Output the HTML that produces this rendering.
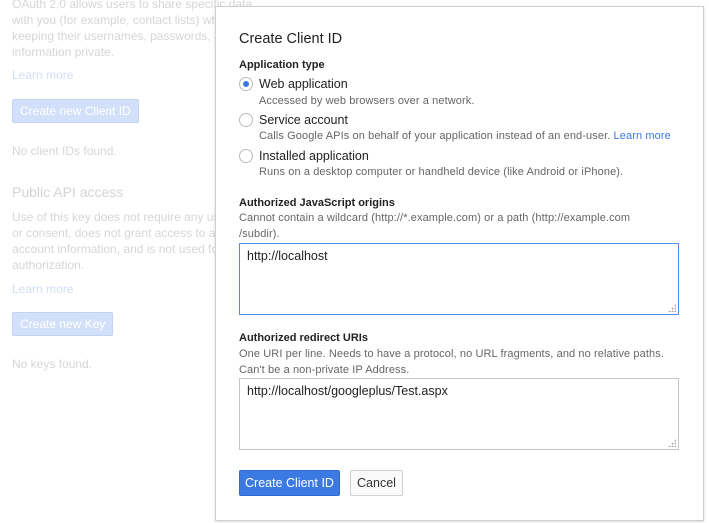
<!DOCTYPE html>
<html><head><style>
body{margin:0;width:709px;height:523px;overflow:hidden;background:#fff;font-family:"Liberation Sans",sans-serif;position:relative}
.a{position:absolute;white-space:nowrap}
.bg{color:#d6d6d6;font-size:12px}
.lnk{color:#d2def6;font-size:12px}
.bb{position:absolute;background:#d2e0f9;border:1px solid #c3d4f3;color:#fff;font-size:12px;line-height:22px;padding:0 7px;border-radius:2px}
#dlg{position:absolute;left:215px;top:6px;width:487px;height:513px;border:1px solid #cfcfcf;background:#fff;box-shadow:0 1px 3px rgba(0,0,0,.15)}
.h{font-size:11px;font-weight:bold;color:#222}
.d{font-size:11px;color:#666;letter-spacing:0.1px}
.r{font-size:12.5px;color:#222}
.rad{position:absolute;width:12px;height:12px;border:1px solid #bbb;border-radius:50%;background:#fff}
.ta{position:absolute;border:1px solid #c5c5c5;font-size:12.5px;color:#222;box-sizing:border-box;padding:5px 7px}
.grip{position:absolute;right:2px;bottom:2px;width:8px;height:8px;background:radial-gradient(circle,#aaa 0.8px,transparent 1px) 0 0/3px 3px;clip-path:polygon(100% 0,100% 100%,0 100%)}
</style></head><body>
<div class="a bg" style="left:12px;top:-4px;line-height:16px">OAuth 2.0 allows users to share specific data<br>with you (for example, contact lists) while<br>keeping their usernames, passwords, and other<br>information private.</div>
<div class="a lnk" style="left:12px;top:68px">Learn more</div>
<div class="bb" style="left:12px;top:99px">Create new Client ID</div>
<div class="a bg" style="left:12px;top:144px">No client IDs found.</div>
<div class="a" style="left:12px;top:184px;color:#d4d4d4;font-size:14px">Public API access</div>
<div class="a bg" style="left:12px;top:209px;line-height:16px">Use of this key does not require any user action<br>or consent, does not grant access to any<br>account information, and is not used for<br>authorization.</div>
<div class="a lnk" style="left:12px;top:282px">Learn more</div>
<div class="bb" style="left:12px;top:312px">Create new Key</div>
<div class="a bg" style="left:12px;top:357px">No keys found.</div>

<div id="dlg">
<div class="a" style="left:23px;top:24px;font-size:14.5px;color:#222">Create Client ID</div>
<div class="a h" style="left:23px;top:52px">Application type</div>
<div class="rad" style="left:23px;top:70px"><div style="position:absolute;left:3px;top:3px;width:6px;height:6px;border-radius:50%;background:#3b7ae3"></div></div>
<div class="a r" style="left:43px;top:70px">Web application</div>
<div class="a d" style="left:43px;top:88px">Accessed by web browsers over a network.</div>
<div class="rad" style="left:23px;top:106px"></div>
<div class="a r" style="left:43px;top:106px">Service account</div>
<div class="a d" style="left:43px;top:123px">Calls Google APIs on behalf of your application instead of an end-user. <span style="color:#3b7ae3">Learn more</span></div>
<div class="rad" style="left:23px;top:142px"></div>
<div class="a r" style="left:43px;top:142px">Installed application</div>
<div class="a d" style="left:43px;top:159px">Runs on a desktop computer or handheld device (like Android or iPhone).</div>
<div class="a h" style="left:23px;top:190px">Authorized JavaScript origins</div>
<div class="a d" style="left:23px;top:203px;line-height:16px">Cannot contain a wildcard (http://*.example.com) or a path (http://example.com<br>/subdir).</div>
<div class="ta" style="left:23px;top:236px;width:440px;height:72px;border-color:#4d8ee9">http://localhost<div class="grip"></div></div>
<div class="a h" style="left:23px;top:325px">Authorized redirect URIs</div>
<div class="a d" style="left:23px;top:339px;line-height:16px">One URI per line. Needs to have a protocol, no URL fragments, and no relative paths.<br>Can't be a non-private IP Address.</div>
<div class="ta" style="left:23px;top:371px;width:440px;height:72px">http://localhost/googleplus/Test.aspx<div class="grip"></div></div>
<div class="a" style="left:23px;top:463px;width:99px;height:24px;background:#3b7ae3;border:1px solid #2f6bd2;border-radius:2px;color:#fff;font-size:12.5px;line-height:24px;text-align:center">Create Client ID</div>
<div class="a" style="left:134px;top:463px;width:51px;height:24px;background:#fafafa;border:1px solid #d0d0d0;border-radius:2px;color:#333;font-size:12.5px;line-height:24px;text-align:center">Cancel</div>
</div>
</body></html>
